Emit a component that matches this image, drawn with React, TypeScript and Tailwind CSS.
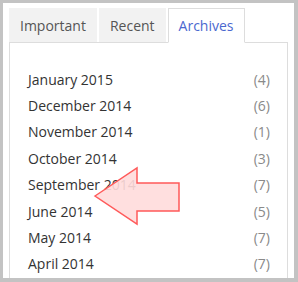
import React from "react";

const items: [string, number][] = [
  ["January 2015", 4],
  ["December 2014", 6],
  ["November 2014", 1],
  ["October 2014", 3],
  ["September 2014", 7],
  ["June 2014", 5],
  ["May 2014", 7],
  ["April 2014", 7],
];

export default function App() {
  return (
    <div
      className="relative w-[298px] h-[282px] overflow-hidden bg-white border-solid border-[#c3c3c3] border-t-[3px] border-l-[3px] border-r-[4px] border-b-[4px]"
      style={{ fontFamily: '"Open Sans", sans-serif' }}
    >
      <div className="pt-[5px] pl-[6px] pr-[6px]">
        <div className="flex items-start gap-[2px] relative z-10">
          <div className="h-[34px] px-[10px] flex items-center bg-[#f2f2f2] text-[14px] text-[#555] border border-transparent">
            Important
          </div>
          <div className="h-[34px] px-[10px] flex items-center bg-[#f2f2f2] text-[14px] text-[#555] border border-transparent">
            Recent
          </div>
          <div className="h-[35px] px-[10px] flex items-center bg-white text-[14px] text-[#4a68cf] border border-[#dddddd] border-b-white">
            Archives
          </div>
        </div>
        <div className="-mt-px border border-[#dddddd] h-[260px] pt-[23px] pl-[18px] pr-[17px]">
          {items.map(([m, c]) => (
            <div
              key={m}
              className="flex justify-between h-[26.4px] items-center text-[14px]"
            >
              <span className="text-[#333]">{m}</span>
              <span className="text-[#8a8a8a]">({c})</span>
            </div>
          ))}
        </div>
      </div>
      <svg
        className="absolute left-[-3px] top-[-3px]"
        width="298"
        height="282"
        viewBox="0 0 298 282"
      >
        <polygon
          points="95,196 137,168 137,183 179,183 179,211 137,211 137,224"
          fill="#ffdcdc"
          fillOpacity="0.9"
          stroke="#ff5a5a"
          strokeWidth="1.5"
          strokeLinejoin="miter"
        />
      </svg>
    </div>
  );
}
